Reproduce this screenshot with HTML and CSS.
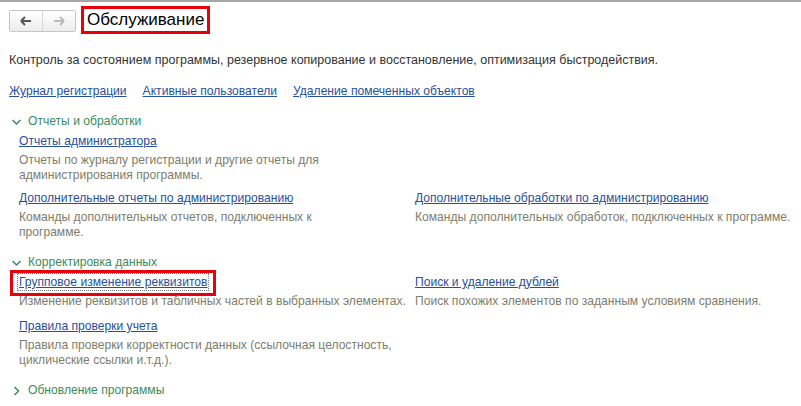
FILE: index.html
```html
<!DOCTYPE html>
<html lang="ru">
<head>
  <meta charset="UTF-8">
  <title>Обслуживание</title>
  <link rel="stylesheet" href="styles.css">
</head>
<body>

  <div class="page">
    <div class="header">
      <div class="nav">
        <span class="nav-btn">
          <svg width="12" height="10" viewBox="0 0 12 10"><path d="M1 5h10M1 5l4-4M1 5l4 4" stroke="#555" stroke-width="2" fill="none"/></svg>
        </span>
        <span class="nav-btn">
          <svg width="12" height="10" viewBox="0 0 12 10"><path d="M11 5H1M11 5L7 1M11 5L7 9" stroke="#bbb" stroke-width="2" fill="none"/></svg>
        </span>
      </div>
      <h1 class="title">Обслуживание</h1>
    </div>

    <p class="intro">Контроль за состоянием программы, резервное копирование и восстановление, оптимизация быстродействия.</p>

    <div class="links">
      <a href="#">Журнал регистрации</a>
      <a href="#">Активные пользователи</a>
      <a href="#">Удаление помеченных объектов</a>
    </div>

    <div class="group">
      <div class="group-title">
        <svg class="chev" width="9" height="10" viewBox="0 0 9 10"><path d="M0.5 3l4 4 4-4" stroke="#3d8a5a" stroke-width="1.5" fill="none"/></svg>
        Отчеты и обработки
      </div>
      <div class="grid">
        <div class="item">
          <a href="#">Отчеты администратора</a>
          <p class="note">Отчеты по журналу регистрации и другие отчеты для<br>администрирования программы.</p>
        </div>
        <div class="item"></div>
        <div class="item">
          <a href="#">Дополнительные отчеты по администрированию</a>
          <p class="note">Команды дополнительных отчетов, подключенных к<br>программе.</p>
        </div>
        <div class="item">
          <a href="#">Дополнительные обработки по администрированию</a>
          <p class="note">Команды дополнительных обработок, подключенных к программе.</p>
        </div>
      </div>
    </div>

    <div class="group">
      <div class="group-title">
        <svg class="chev" width="9" height="10" viewBox="0 0 9 10"><path d="M0.5 3l4 4 4-4" stroke="#3d8a5a" stroke-width="1.5" fill="none"/></svg>
        Корректировка данных
      </div>
      <div class="grid">
        <div class="item first">
          <span class="mark"><a href="#" class="focused">Групповое изменение реквизитов</a></span>
          <p class="note">Изменение реквизитов и табличных частей в выбранных элементах.</p>
        </div>
        <div class="item first">
          <a href="#">Поиск и удаление дублей</a>
          <p class="note">Поиск похожих элементов по заданным условиям сравнения.</p>
        </div>
        <div class="item">
          <a href="#">Правила проверки учета</a>
          <p class="note">Правила проверки корректности данных (ссылочная целостность,<br>циклические ссылки и.т.д.).</p>
        </div>
      </div>
    </div>

    <div class="group">
      <div class="group-title">
        <svg class="chev" width="9" height="10" viewBox="0 0 9 10"><path d="M2.5 1l4 4-4 4" stroke="#3d8a5a" stroke-width="1.5" fill="none"/></svg>
        Обновление программы
      </div>
    </div>
  </div>

</body>
</html>
```

FILE: styles.css
```css
body {
  margin: 0;
  font-family: "Liberation Sans", Arial, sans-serif;
  font-size: 12.1px;
  line-height: 15px;
  color: #333;
  background: #fff;
  border-top: 2px solid #a6a6a6;
}

.page {
  padding: 0 9px;
}

.header {
  display: flex;
  align-items: center;
  padding-top: 4px;
}

.nav {
  display: flex;
  border: 1px solid #c6c6c6;
  border-radius: 2px;
  margin-top: 1px;
}

.nav-btn {
  width: 32px;
  height: 20px;
  display: flex;
  align-items: center;
  justify-content: center;
  background: linear-gradient(#ffffff, #ececec);
}

.nav-btn + .nav-btn {
  border-left: 1px solid #d6d6d6;
}

.title {
  margin: 0 0 0 5px;
  font-size: 17px;
  font-weight: normal;
  line-height: 22px;
  color: #000;
  border: 3px solid #e8000b;
  padding: 0 3px;
}

.intro {
  margin: 19px 0 0;
  font-size: 12.5px;
}

.links {
  display: flex;
  gap: 16px;
  margin: 16px 0 1px;
}

a {
  color: #28509a;
}

.group {
  margin-top: 15px;
}

.group-title {
  display: flex;
  align-items: center;
  gap: 7px;
  color: #3d8a5a;
  padding-left: 3px;
}

.grid {
  display: grid;
  grid-template-columns: 396px 1fr;
  padding-left: 10px;
  margin-top: 5px;
  row-gap: 8px;
}

.note {
  margin: 4px 0 0;
  color: #7d7d6c;
  white-space: nowrap;
}

.first {
  margin-bottom: 2px;
}

.mark {
  display: inline-block;
  outline: 3px solid #e8000b;
  padding: 2px 6px 3px;
  margin: -2px -6px -3px;
}

.focused {
  outline: 1px dotted #777;
  outline-offset: 1px;
}
```
